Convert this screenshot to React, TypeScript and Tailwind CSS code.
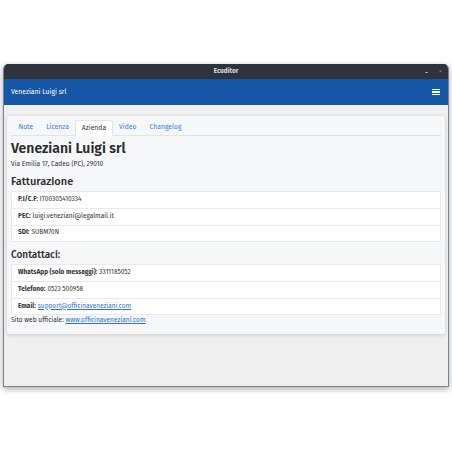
import React from "react";

const rows1 = [
  { k: "P.I/C.F:", v: "IT00305410334" },
  { k: "PEC:", v: "luigi.veneziani@legalmail.it" },
  { k: "SDI:", v: "SUBM70N" },
];

export default function App() {
  return (
    <div className="w-[452px] h-[452px] bg-white relative overflow-hidden" style={{ fontFamily: '"Fira Sans", "Noto Sans", sans-serif' }}>
      <div className="h-[64px]" />
      <div className="mx-[3px] w-[446px] h-[323px] flex flex-col rounded-t-[5px] overflow-hidden border border-[#7d828c] border-t-0 shadow-[0_2px_6px_rgba(0,0,0,0.35)] bg-[#efefef]">
        <div className="h-[15px] bg-[#2e333e] flex items-center justify-center relative shrink-0">
          <span className="text-[6.5px] font-bold text-[#d8dbe0]">Ecuditor</span>
          <span className="absolute right-[20px] top-[8px] w-[3px] h-[1px] bg-[#9aa0aa]" />
          <span className="absolute right-[6px] top-[4px] text-[6px] leading-none text-[#9aa0aa]">×</span>
        </div>
        <div className="h-[26px] bg-[#1656a6] flex items-center justify-between pl-[7px] pr-[8px] shrink-0">
          <span className="text-[6.8px] text-white">Veneziani Luigi srl</span>
          <div className="flex flex-col gap-[1.5px]">
            <span className="block w-[8px] h-[1.2px] bg-white" />
            <span className="block w-[8px] h-[1.2px] bg-white" />
            <span className="block w-[8px] h-[1.2px] bg-white" />
          </div>
        </div>
        <div className="flex-1 px-[3px] pt-[11px]">
          <div className="bg-[#f6f7f9] rounded-[3px] shadow-[0_1px_4px_rgba(0,0,0,0.15)] px-[4px] pt-[4px] pb-[9px]">
            <div className="flex border-b border-[#e2e4e8] h-[16px] pl-[1px]">
              {["Note", "Licenza", "Azienda", "Video", "Changelog"].map((t) => (
                <div
                  key={t}
                  className={
                    t === "Azienda"
                      ? "px-[5.5px] flex items-center text-[6.8px] text-[#333] bg-white border border-[#e2e4e8] border-b-white rounded-t-[3px] -mb-[1px]"
                      : "px-[5.5px] flex items-center text-[6.8px] text-[#3d7fe0] border border-transparent"
                  }
                >
                  {t}
                </div>
              ))}
            </div>
            <div className="text-[14px] font-semibold text-[#2a2a2a] leading-none mt-[6px]">Veneziani Luigi srl</div>
            <div className="text-[6.6px] text-[#333] mt-[4px]">Via Emilia 17, Cadeo (PC), 29010</div>
            <div className="text-[11px] font-medium text-[#2a2a2a] leading-none mt-[6px]">Fatturazione</div>
            <div className="mt-[4px] bg-white rounded-[2px] border border-[#e8e9ec] flex flex-col">
              {rows1.map((r, i) => (
                <div key={r.k} className={"h-[16.4px] flex items-center px-[6px] text-[6.5px] text-[#333] " + (i > 0 ? "border-t border-[#e8e9ec]" : "")}>
                  <span className="font-bold mr-[2px]">{r.k}</span>
                  <span>{r.v}</span>
                </div>
              ))}
            </div>
            <div className="text-[10px] font-medium text-[#2a2a2a] leading-none mt-[8px]">Contattaci:</div>
            <div className="mt-[4px] bg-white rounded-[2px] border border-[#e8e9ec] flex flex-col">
              <div className="h-[16.4px] flex items-center px-[6px] text-[6.5px] text-[#333]">
                <span className="font-bold mr-[2px]">WhatsApp (solo messaggi):</span>
                <span>3311185052</span>
              </div>
              <div className="h-[16.4px] flex items-center px-[6px] text-[6.5px] text-[#333] border-t border-[#e8e9ec]">
                <span className="font-bold mr-[2px]">Telefono:</span>
                <span>0523 500958</span>
              </div>
              <div className="h-[16.4px] flex items-center px-[6px] text-[6.5px] text-[#333] border-t border-[#e8e9ec]">
                <span className="font-bold mr-[2px]">Email:</span>
                <span className="text-[#2f6fde] underline">support@officinaveneziani.com</span>
              </div>
            </div>
            <div className="text-[6.6px] text-[#333] leading-[10px]">
              Sito web ufficiale: <span className="text-[#2f6fde] underline">www.officinaveneziani.com</span>
            </div>
          </div>
        </div>
      </div>
    </div>
  );
}
